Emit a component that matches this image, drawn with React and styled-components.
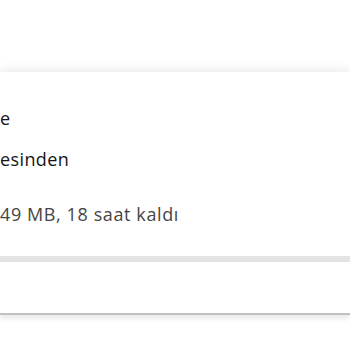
import styled, { createGlobalStyle } from "styled-components"

const Global = createGlobalStyle`
  html, body {
    margin: 0;
    padding: 0;
    background: #ffffff;
  }
  body {
    font-family: "Open Sans", "Noto Sans", sans-serif;
  }
`

const Page = styled.div`
  width: 350px;
  height: 350px;
  overflow: hidden;
  background: #fff;
  padding-top: 72px;
  box-sizing: border-box;
`

const Card = styled.div`
  background: #fff;
  box-shadow: 0 -2px 10px rgba(0, 0, 0, 0.09);
  height: 184px;
  box-sizing: border-box;
  padding-top: 34px;
  display: flex;
  flex-direction: column;
`

const Line = styled.div`
  font-size: 18px;
  letter-spacing: ${p => p.small ? "0.6px" : "0.4px"};
  line-height: 24px;
  color: ${p => p.muted ? "#454545" : "#141414"};
  margin-top: ${p => p.gap || 0}px;
  white-space: nowrap;
`

const Divider = styled.div`
  height: 6px;
  background: #e4e4e4;
`

const Footer = styled.div`
  height: 51px;
  background: #fff;
  border-bottom: 2px solid #c2c2c2;
  box-shadow: 0 3px 6px rgba(0, 0, 0, 0.1);
`

export default function App() {
  return (
    <>
      <Global />
      <Page>
        <Card>
          <Line>e</Line>
          <Line gap={17}>esinden</Line>
          <Line small muted gap={31}>49 MB, 18 saat kaldı</Line>
        </Card>
        <Divider />
        <Footer />
      </Page>
    </>
  )
}
